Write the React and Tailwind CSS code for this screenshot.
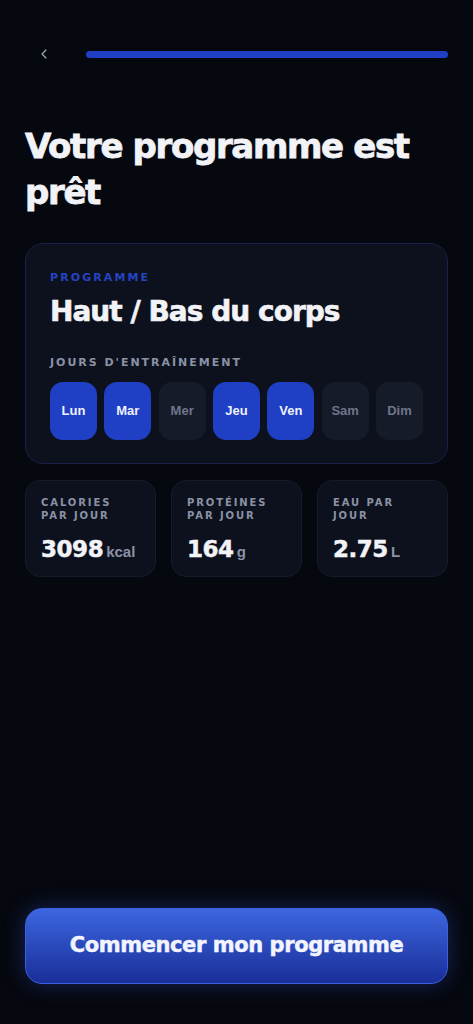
import { ChevronLeft } from "lucide-react";

const days = [
    { label: "Lun", on: true },
    { label: "Mar", on: true },
    { label: "Mer", on: false },
    { label: "Jeu", on: true },
    { label: "Ven", on: true },
    { label: "Sam", on: false },
    { label: "Dim", on: false },
];

const stats = [
    { label: ["CALORIES", "PAR JOUR"], value: "3098", unit: "kcal" },
    { label: ["PROTÉINES", "PAR JOUR"], value: "164", unit: "g" },
    { label: ["EAU PAR", "JOUR"], value: "2.75", unit: "L" },
];

const heavy = { fontFamily: "'DejaVu Sans', 'Liberation Sans', sans-serif" };
const plain = { fontFamily: "'Liberation Sans', Arial, sans-serif" };

function App() {
    return (
        <div className="min-h-[1024px] w-full bg-[#06080f] text-white flex flex-col" style={heavy}>
            {/* top bar */}
            <div className="flex items-center gap-[34px] pl-[36px] pr-[25px] pt-[46px]">
                <ChevronLeft className="w-[16px] h-[16px] text-[#a3a9bc]" strokeWidth={1.75} />
                <div className="flex-1 h-[7px] rounded-full bg-[#1f3fc4]" />
            </div>

            <h1 className="px-[25px] mt-[61px] text-[34px] leading-[46px] font-bold tracking-[-0.04em] text-[#f2f3f7] [-webkit-text-stroke:0.8px_#f2f3f7]">
                Votre programme est prêt
            </h1>

            {/* programme card */}
            <div className="mx-[25px] mt-[28px] rounded-[18px] border border-[#19204a] bg-[#0d111d] px-[24px] pt-[27px] pb-[23px]">
                <p className="text-[11px] leading-[14px] font-bold tracking-[0.19em] text-[#2444c4]">PROGRAMME</p>
                <h2 className="mt-[10px] text-[28px] leading-[34px] font-bold tracking-[-0.035em] text-[#f2f3f7] [-webkit-text-stroke:0.6px_#f2f3f7]">
                    Haut / Bas du corps
                </h2>
                <p className="mt-[27px] text-[11px] leading-[14px] font-bold tracking-[0.18em] text-[#8b91a6]">
                    JOURS D'ENTRAÎNEMENT
                </p>
                <div className="mt-[12px] flex justify-between" style={plain}>
                    {days.map((d) => (
                        <div
                            key={d.label}
                            className={
                                d.on
                                    ? "w-[47px] h-[58px] rounded-[13px] bg-[#1f3fc4] flex items-center justify-center text-[13px] font-bold text-[#eef1ff]"
                                    : "w-[47px] h-[58px] rounded-[13px] bg-[#161b29] flex items-center justify-center text-[13px] font-bold text-[#6f7588]"
                            }
                        >
                            {d.label}
                        </div>
                    ))}
                </div>
            </div>

            {/* stats */}
            <div className="mx-[25px] mt-[16px] grid grid-cols-3 gap-[15px]">
                {stats.map((s) => (
                    <div key={s.value} className="h-[97px] rounded-[15px] border border-[#161b2c] bg-[#0d111d] px-[15px] pt-[15px]">
                        <p className="text-[10px] leading-[13px] font-bold tracking-[0.19em] text-[#8b91a6]">
                            {s.label[0]}
                            <br />
                            {s.label[1]}
                        </p>
                        <p className="mt-[13px] flex items-baseline gap-[3px]">
                            <span className="text-[23px] leading-[28px] font-bold tracking-[-0.02em] text-[#f2f3f7] [-webkit-text-stroke:0.5px_#f2f3f7]">{s.value}</span>
                            <span className="text-[15px] font-bold text-[#8b91a6]" style={plain}>{s.unit}</span>
                        </p>
                    </div>
                ))}
            </div>

            <div className="flex-1" />

            <div className="px-[25px] pb-[40px]">
                <button className="w-full h-[76px] rounded-[17px] border border-[#3b5fe0] bg-gradient-to-b from-[#3d66e0] to-[#1a2e98] shadow-[0_0_22px_rgba(50,90,220,0.35)] text-[21px] font-bold tracking-[-0.02em] text-[#f2f4ff] [-webkit-text-stroke:0.5px_#f2f4ff]">
                    Commencer mon programme
                </button>
            </div>
        </div>
    );
}

export default App;
